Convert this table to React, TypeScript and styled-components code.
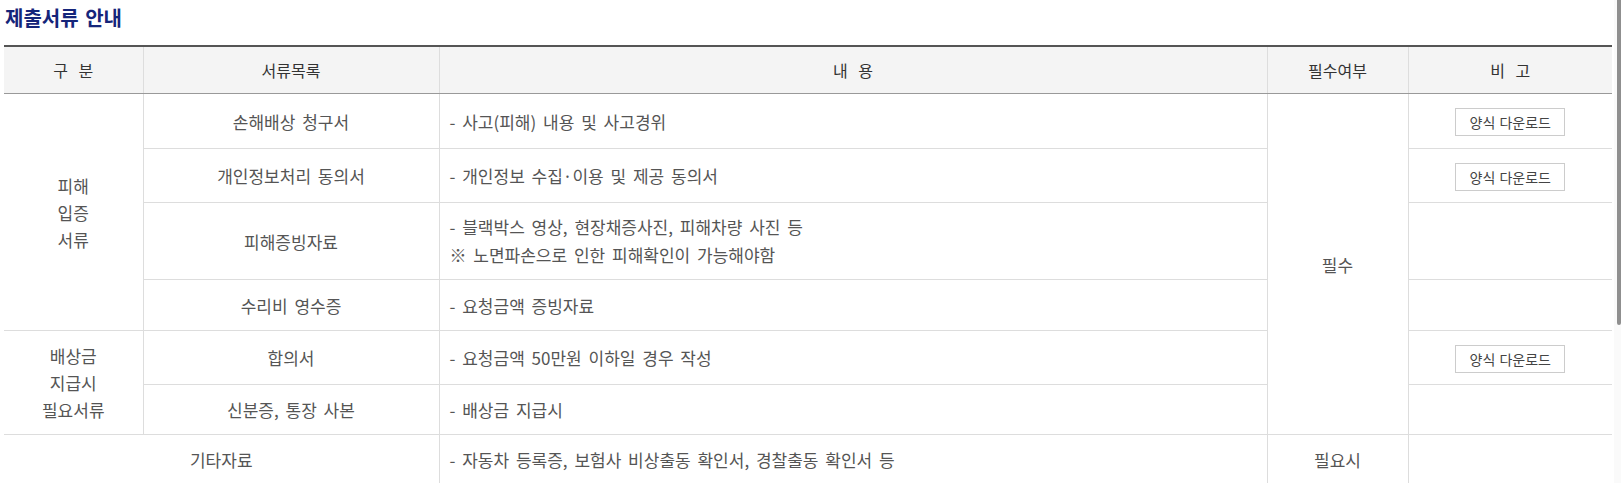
import React from "react";
import styled, { createGlobalStyle } from "styled-components";

const GlobalStyle = createGlobalStyle`
  html, body {
    margin: 0;
    padding: 0;
    background: #fff;
    overflow: hidden;
  }
  body {
    font-family: "Noto Sans CJK KR", "Noto Sans", sans-serif;
  }
`;

const Page = styled.div`
  padding: 0 9px 0 4px;
`;

const Title = styled.h3`
  margin: 2px 0 0 1px;
  height: 43px;
  font-size: 20px;
  line-height: 32px;
  font-weight: 700;
  color: #15257a;
  word-spacing: 2px;
`;

const Table = styled.table`
  width: 1608px;
  border-collapse: collapse;
  table-layout: fixed;
  border-top: 2px solid #555;
  color: #555;
  font-size: 17px;
`;

const HeadCell = styled.th`
  height: 46px;
  padding: 0;
  background: #f4f4f4;
  border-bottom: 1px solid #999;
  border-left: 1px solid #ddd;
  font-size: 16px;
  font-weight: 400;
  color: #333;
  text-align: center;
  word-spacing: 7px;
  &:first-child {
    border-left: none;
  }
`;

const Row = styled.tr<{ $h: number }>`
  height: ${(p) => p.$h}px;
`;

const Cell = styled.td<{ $align?: "left" | "center"; $edge?: boolean }>`
  padding: 0 10px;
  border-bottom: 1px solid #ddd;
  border-left: ${(p) => (p.$edge ? "none" : "1px solid #ddd")};
  text-align: ${(p) => p.$align ?? "center"};
  vertical-align: middle;
  line-height: 27px;
  word-spacing: 3px;
  color: #555;
`;

const Lines = styled.div`
  line-height: 28px;
`;

const DownloadButton = styled.button`
  display: inline-flex;
  align-items: center;
  justify-content: center;
  width: 110px;
  height: 28px;
  padding: 0;
  border: 1px solid #ccc;
  background: #fff;
  font-family: inherit;
  font-size: 14px;
  word-spacing: 1px;
  color: #444;
  vertical-align: middle;
  cursor: pointer;
`;

const ScrollTrack = styled.div`
  position: fixed;
  top: 0;
  right: 0;
  width: 7px;
  height: 100%;
  background: #fafafa;
`;

const ScrollThumb = styled.div`
  position: absolute;
  top: 0;
  right: 0;
  width: 4px;
  height: 325px;
  background: #8f8f8f;
  border-radius: 0 0 2px 2px;
`;

const cols = [139, 296, 828, 141, 204];

export default function App() {
  return (
    <>
      <GlobalStyle />
      <Page>
        <Title>제출서류 안내</Title>
        <Table>
          <colgroup>
            {cols.map((w, i) => (
              <col key={i} style={{ width: w }} />
            ))}
          </colgroup>
          <thead>
            <tr>
              <HeadCell>구 분</HeadCell>
              <HeadCell>서류목록</HeadCell>
              <HeadCell>내 용</HeadCell>
              <HeadCell>필수여부</HeadCell>
              <HeadCell>비 고</HeadCell>
            </tr>
          </thead>
          <tbody>
            <Row $h={55}>
              <Cell rowSpan={4} $edge>
                피해
                <br />
                입증
                <br />
                서류
              </Cell>
              <Cell>손해배상 청구서</Cell>
              <Cell $align="left">- 사고(피해) 내용 및 사고경위</Cell>
              <Cell rowSpan={6}>필수</Cell>
              <Cell>
                <DownloadButton>양식 다운로드</DownloadButton>
              </Cell>
            </Row>
            <Row $h={54}>
              <Cell>개인정보처리 동의서</Cell>
              <Cell $align="left">- 개인정보 수집·이용 및 제공 동의서</Cell>
              <Cell>
                <DownloadButton>양식 다운로드</DownloadButton>
              </Cell>
            </Row>
            <Row $h={77}>
              <Cell>피해증빙자료</Cell>
              <Cell $align="left">
                <Lines>
                  - 블랙박스 영상, 현장채증사진, 피해차량 사진 등
                  <br />※ 노면파손으로 인한 피해확인이 가능해야함
                </Lines>
              </Cell>
              <Cell />
            </Row>
            <Row $h={51}>
              <Cell>수리비 영수증</Cell>
              <Cell $align="left">- 요청금액 증빙자료</Cell>
              <Cell />
            </Row>
            <Row $h={54}>
              <Cell rowSpan={2} $edge>
                배상금
                <br />
                지급시
                <br />
                필요서류
              </Cell>
              <Cell>합의서</Cell>
              <Cell $align="left">- 요청금액 50만원 이하일 경우 작성</Cell>
              <Cell>
                <DownloadButton>양식 다운로드</DownloadButton>
              </Cell>
            </Row>
            <Row $h={50}>
              <Cell>신분증, 통장 사본</Cell>
              <Cell $align="left">- 배상금 지급시</Cell>
              <Cell />
            </Row>
            <Row $h={50}>
              <Cell colSpan={2} $edge>
                기타자료
              </Cell>
              <Cell $align="left">
                - 자동차 등록증, 보험사 비상출동 확인서, 경찰출동 확인서 등
              </Cell>
              <Cell>필요시</Cell>
              <Cell />
            </Row>
          </tbody>
        </Table>
      </Page>
      <ScrollTrack>
        <ScrollThumb />
      </ScrollTrack>
    </>
  );
}
